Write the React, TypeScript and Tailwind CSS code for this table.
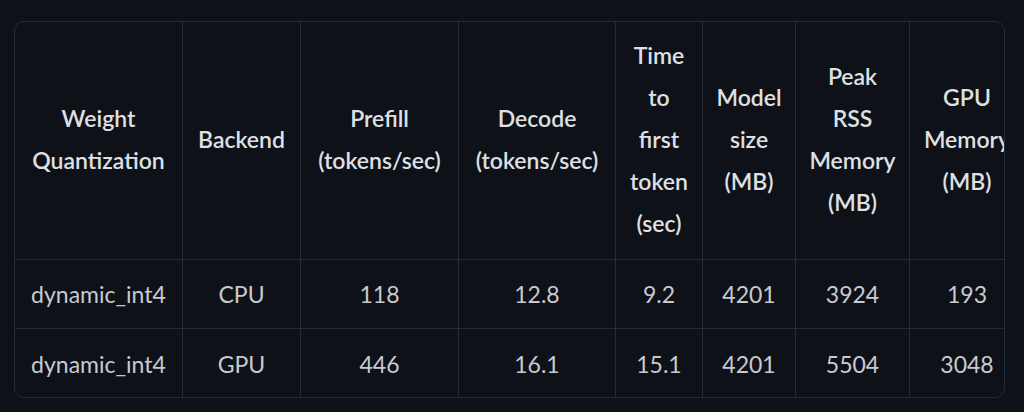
import React from "react";

const cols = [168, 118, 158, 157, 87, 93, 114, 115];

const headers: string[][] = [
  ["Weight", "Quantization"],
  ["Backend"],
  ["Prefill", "(tokens/sec)"],
  ["Decode", "(tokens/sec)"],
  ["Time", "to", "first", "token", "(sec)"],
  ["Model", "size", "(MB)"],
  ["Peak", "RSS", "Memory", "(MB)"],
  ["GPU", "Memory", "(MB)"],
];

const rows: string[][] = [
  ["dynamic_int4", "CPU", "118", "12.8", "9.2", "4201", "3924", "193"],
  ["dynamic_int4", "GPU", "446", "16.1", "15.1", "4201", "5504", "3048"],
];

export default function App() {
  return (
    <div
      className="w-[1024px] h-[412px] bg-[#0e1117] pt-[21px] pl-[14px] overflow-hidden"
      style={{ fontFamily: "Lato, 'Noto Sans', sans-serif" }}
    >
      <div className="w-[991px] h-[377px] border border-[#262b35] rounded-[10px] overflow-hidden">
        <table className="border-separate border-spacing-0 table-fixed w-[1010px]">
          <colgroup>
            {cols.map((w, i) => (
              <col key={i} style={{ width: w }} />
            ))}
          </colgroup>
          <thead>
            <tr>
              {headers.map((h, i) => (
                <th
                  key={i}
                  className="h-[238px] border-r border-b border-[#262b35] text-center align-middle font-semibold text-[23px] leading-[42px] text-[#dfe0e4] p-0 pb-[3px]"
                >
                  {h.map((l, j) => (
                    <div key={j} className="whitespace-nowrap">
                      {l}
                    </div>
                  ))}
                </th>
              ))}
            </tr>
          </thead>
          <tbody>
            {rows.map((r, ri) => (
              <tr key={ri}>
                {r.map((c, ci) => (
                  <td
                    key={ci}
                    className={`h-[69px] border-r border-[#262b35] text-center align-middle text-[23px] leading-[42px] text-[#c8cad0] p-0 whitespace-nowrap ${
                      ri === 0 ? "border-b" : ""
                    }`}
                  >
                    {c}
                  </td>
                ))}
              </tr>
            ))}
          </tbody>
        </table>
      </div>
    </div>
  );
}
